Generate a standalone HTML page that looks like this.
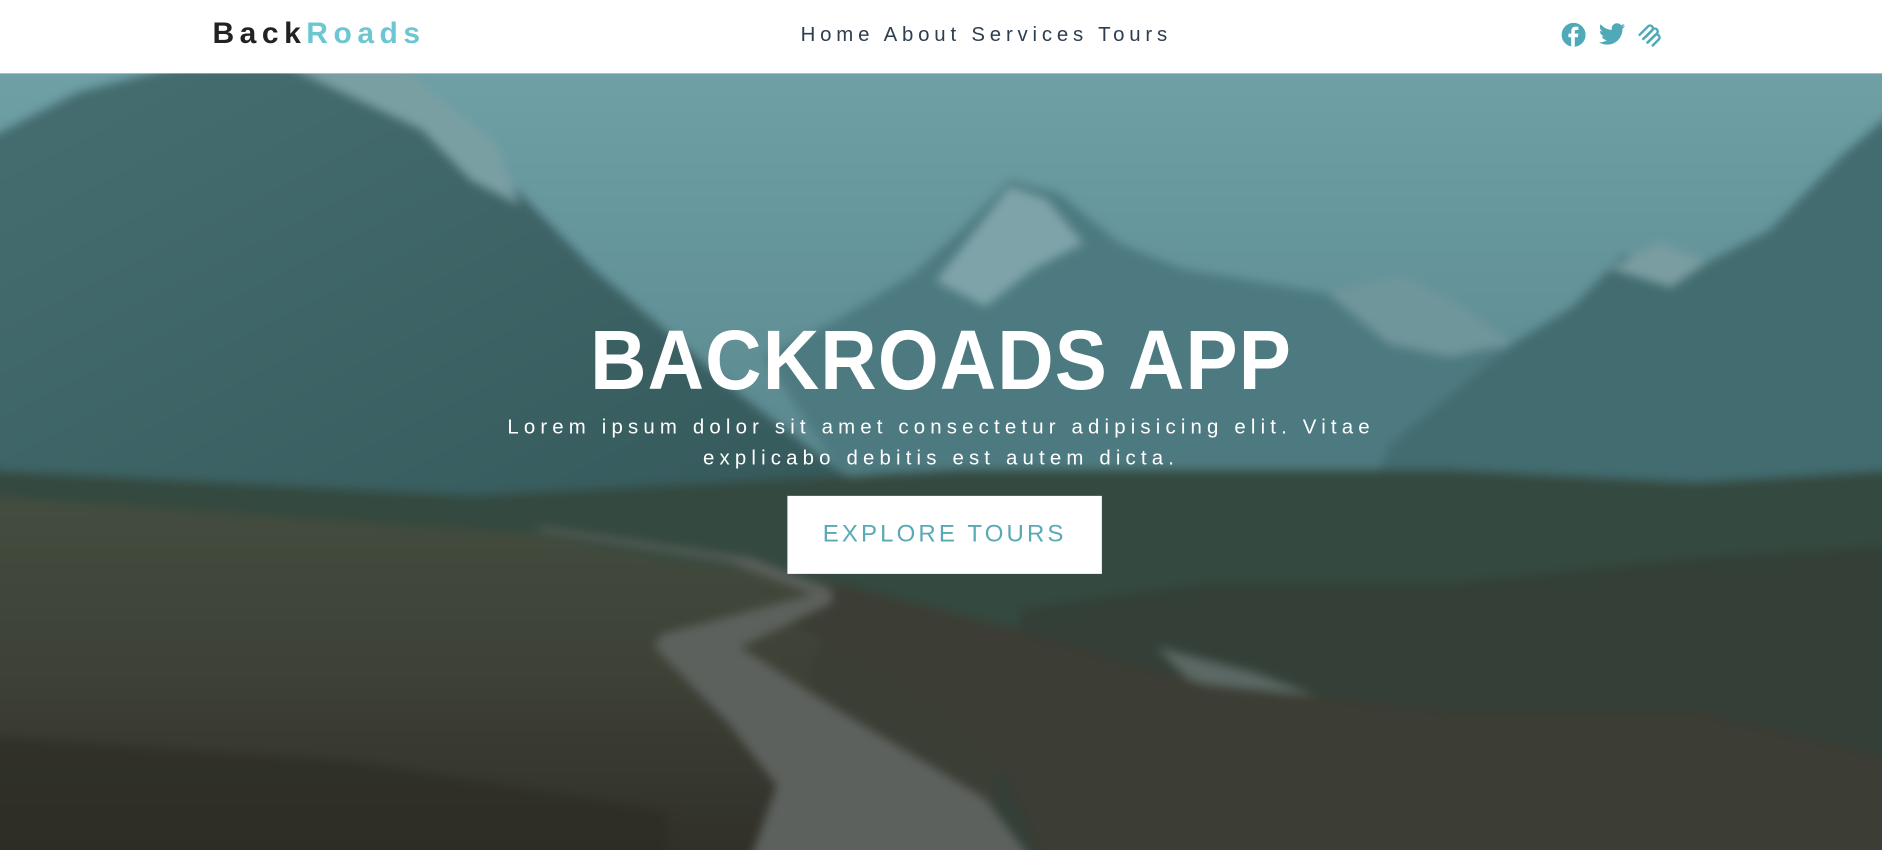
<!DOCTYPE html>
<html><head><meta charset="utf-8"><style>
*{margin:0;padding:0;box-sizing:border-box}
html,body{width:1882px;height:850px;overflow:hidden;background:#fff}
#wrap{position:absolute;left:0;top:0;width:1568px;height:708px;transform:scale(1.2003,1.2006);transform-origin:0 0;font-family:"Liberation Sans",sans-serif}
header{position:absolute;left:0;top:0;width:1568px;height:61px;background:#fff;z-index:3}
.logo{position:absolute;left:177px;top:14px;font-size:25px;font-weight:bold;letter-spacing:4.6px;color:#222}
.logo span{color:#6cc7d2}
.nav{position:absolute;left:667px;top:19px;font-size:17px;letter-spacing:4px;color:#2c3e50}
.icons{position:absolute;left:1301px;top:19px}
.icons svg{position:absolute;top:0}
.hero{position:absolute;left:0;top:61px;width:1568px;height:647px;overflow:hidden}
.title{position:absolute;left:0;width:1568px;top:199px;text-align:center;color:#fff;font-weight:bold;font-size:70px;letter-spacing:1px;transform:scaleX(0.93);z-index:2}
.sub{position:absolute;left:414px;width:740px;top:282px;text-align:center;color:#fff;font-size:17px;letter-spacing:4.3px;line-height:26px;z-index:2}
.btn{position:absolute;left:656px;top:352px;width:262px;height:65px;background:#fff;color:#5aa9b6;font-size:20px;letter-spacing:2.6px;text-align:center;line-height:65px;z-index:2}
</style></head><body>
<div id="wrap">
<header>
<div class="logo">Back<span>Roads</span></div>
<div class="nav">Home About Services Tours</div>
<div class="icons">
<svg style="left:0" width="20" height="20" viewBox="0 0 20 20"><circle cx="10" cy="10" r="10" fill="#4fa9b8"/><path d="M11 20V12h2.6l.4-3H11V7.3c0-.9.3-1.4 1.5-1.4H14V3.3c-.3 0-1.2-.1-2.2-.1-2.2 0-3.7 1.3-3.7 3.8V9H5.7v3H8v8z" fill="#fff"/></svg>
<svg style="left:31px" width="22" height="19" viewBox="0 0 24 20"><path d="M24 2.4c-.9.4-1.8.6-2.8.8 1-.6 1.8-1.6 2.2-2.7-1 .6-2 1-3.1 1.2C19.3.6 18 0 16.6 0c-2.7 0-4.9 2.2-4.9 4.9 0 .4 0 .8.1 1.1C7.7 5.8 4.1 3.9 1.7.9c-.4.7-.7 1.600-.7 2.5 0 1.7.9 3.2 2.2 4.1-.8 0-1.6-.2-2.2-.6v.1c0 2.4 1.7 4.4 3.9 4.8-.4.1-.8.2-1.3.2-.3 0-.6 0-.9-.1.6 2 2.4 3.4 4.6 3.4-1.7 1.3-3.8 2.1-6.1 2.1-.4 0-.8 0-1.2-.1 2.2 1.4 4.8 2.2 7.5 2.2 9.1 0 14-7.5 14-14v-.6c1-.7 1.8-1.6 2.5-2.5z" fill="#4fa9b8"/></svg>
<svg style="left:63px" width="21" height="20" viewBox="0 0 21 20" fill="none" stroke="#4fa9b8" stroke-width="2" stroke-linecap="round"><path d="M2 10l7-7a2.4 2.4 0 0 1 3.4 3.4L7 11.8"/><path d="M5 13.5l8-8a2.4 2.4 0 0 1 3.4 3.4L9 16.2"/><path d="M8.5 16.5l6-6a2.4 2.4 0 0 1 3.4 3.4l-5 5"/></svg>
</div>
</header>
<div class="hero">
<svg width="1600" height="680" viewBox="0 0 1568 647" preserveAspectRatio="none" style="position:absolute;left:-16px;top:-16px;filter:blur(4px)">
<defs>
<linearGradient id="sky" x1="0" y1="0" x2="0" y2="1"><stop offset="0" stop-color="#6fa1a7"/><stop offset="0.4" stop-color="#5f8d94"/><stop offset="1" stop-color="#4d7479"/></linearGradient>
<linearGradient id="fg" x1="0" y1="0" x2="0" y2="1"><stop offset="0" stop-color="#434d3f"/><stop offset="0.5" stop-color="#3d4035"/><stop offset="1" stop-color="#2f2e27"/></linearGradient>
<linearGradient id="ml" x1="0" y1="0" x2="1" y2="1"><stop offset="0" stop-color="#466e71"/><stop offset="1" stop-color="#34585a"/></linearGradient>
</defs>
<rect width="1568" height="647" fill="url(#sky)"/>
<path d="M640 240L700 210 760 175 800 140 840 100 880 110 930 150 980 170 1040 180 1100 190 1150 200 1200 220 1260 240 1300 320 1000 360 700 330z" fill="#4d7a80"/>
<path d="M780 180L840 105 870 115 900 150 860 170 820 200z" fill="#7ea4aa"/>
<path d="M1100 190L1160 175 1210 200 1250 230 1200 240 1150 230z" fill="#6f969b"/>
<path d="M0 70L80 30 200 0 300 0 380 60 440 110 500 170 560 220 620 270 700 330 760 360 600 380 300 380 0 350z" fill="url(#ml)"/>
<path d="M250 10L330 0 380 40 420 70 440 120 400 100 360 60z" fill="#7a9fa3"/>
<path d="M1568 40L1520 80 1460 140 1400 170 1340 160 1300 200 1250 230 1200 270 1150 310 1130 360 1568 380z" fill="#426c70"/>
<path d="M1330 170L1370 150 1410 165 1380 185z" fill="#7a9da1"/>
<path d="M0 330L200 340 400 350 600 340 800 330 1000 330 1200 330 1400 340 1568 330V647H0z" fill="#34493f"/>
<path d="M0 440L400 430 700 440 900 460 1200 480 1568 470V647H0z" fill="#3b3e35"/>
<path d="M0 350L150 360 300 370 450 380 560 400 700 420 680 480 660 560 640 647H0z" fill="url(#fg)"/>
<path d="M850 440L1000 420 1200 420 1400 400 1568 390V647H820z" fill="#333f37"/>
<path d="M960 470L1040 490 1120 520 1200 540 1230 570 1100 540 990 500z" fill="#6c7a78" opacity="0.7"/>
<path d="M640 440L720 480 780 520 830 560 870 647H1568V560L1400 520 1200 520 1000 500 860 460 700 420z" fill="#3c3d34"/>
<path d="M0 540L300 560 560 600 560 647H0z" fill="#2c2c25" opacity="0.6"/>
<path d="M450 377L610 402 680 428 555 460 550 470 610 530 650 580 625 647H865L820 590 700 520 620 470 695 435 695 425 630 400 460 375z" fill="#5d615d"/>
</svg>
<div class="title">BACKROADS APP</div>
<div class="sub">Lorem ipsum dolor sit amet consectetur adipisicing elit. Vitae explicabo debitis est autem dicta.</div>
<div class="btn">EXPLORE TOURS</div>
</div>
</div>
</body></html>
